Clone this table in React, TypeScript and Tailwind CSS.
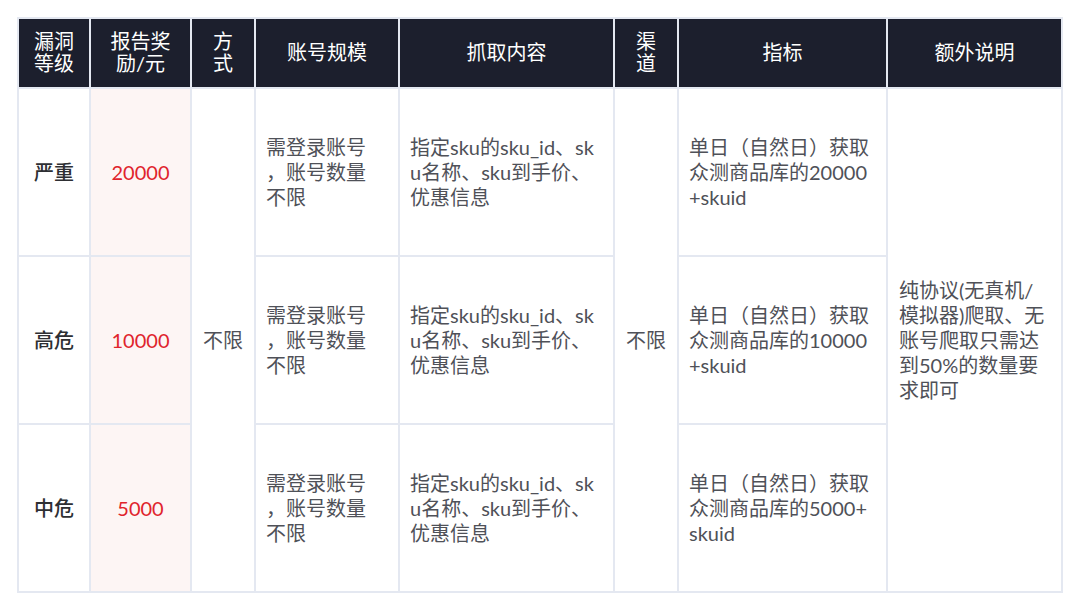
const FONT = '"Lato", "Noto Sans CJK SC", sans-serif';

const headers: { label: string[]; w: number }[] = [
  { label: ['漏洞', '等级'], w: 72 },
  { label: ['报告奖', '励/元'], w: 101 },
  { label: ['方', '式'], w: 64 },
  { label: ['账号规模'], w: 144 },
  { label: ['抓取内容'], w: 215 },
  { label: ['渠', '道'], w: 64 },
  { label: ['指标'], w: 209 },
  { label: ['额外说明'], w: 175 },
];

const rows = [
  { level: '严重', reward: '20000', metric: ['单日（自然日）获取', '众测商品库的20000', '+skuid'] },
  { level: '高危', reward: '10000', metric: ['单日（自然日）获取', '众测商品库的10000', '+skuid'] },
  { level: '中危', reward: '5000', metric: ['单日（自然日）获取', '众测商品库的5000+', 'skuid'] },
];

const account = ['需登录账号', '，账号数量', '不限'];
const content = ['指定sku的sku_id、sk', 'u名称、sku到手价、', '优惠信息'];
const extra = ['纯协议(无真机/', '模拟器)爬取、无', '账号爬取只需达', '到50%的数量要', '求即可'];

function Lines({ lines }: { lines: string[] }) {
  return (
    <>
      {lines.map((l, i) => (
        <div key={i} className="whitespace-nowrap">
          {l}
        </div>
      ))}
    </>
  );
}

const cell = 'border-2 border-[#e4e8f1] align-middle';

export default function App() {
  return (
    <div className="min-h-[609px] bg-white pl-[17px] pt-[17px]" style={{ fontFamily: FONT }}>
      <table className="table-fixed border-collapse text-[20px] leading-[25px] text-[#4f5158]" style={{ width: 1046 }}>
        <colgroup>
          {headers.map((h, i) => (
            <col key={i} style={{ width: h.w }} />
          ))}
        </colgroup>
        <thead>
          <tr className="h-[70px] bg-[#1c1f2d] text-white">
            {headers.map((h, i) => (
              <th key={i} className={`${cell} pb-[2px] text-center font-normal leading-[22px]`}>
                <Lines lines={h.label} />
              </th>
            ))}
          </tr>
        </thead>
        <tbody>
          {rows.map((r, i) => (
            <tr key={i} className="h-[168px]">
              <td className={`${cell} text-center font-medium text-[#2e2f33]`}>{r.level}</td>
              <td className={`${cell} bg-[#fdf5f4] text-center text-[#e0242c]`}>{r.reward}</td>
              {i === 0 && (
                <td rowSpan={3} className={`${cell} text-center`}>
                  不限
                </td>
              )}
              <td className={`${cell} pl-[10px]`}>
                <Lines lines={account} />
              </td>
              <td className={`${cell} pl-[10px]`}>
                <Lines lines={content} />
              </td>
              {i === 0 && (
                <td rowSpan={3} className={`${cell} text-center`}>
                  不限
                </td>
              )}
              <td className={`${cell} pl-[10px]`}>
                <Lines lines={r.metric} />
              </td>
              {i === 0 && (
                <td rowSpan={3} className={`${cell} pl-[11px]`}>
                  <Lines lines={extra} />
                </td>
              )}
            </tr>
          ))}
        </tbody>
      </table>
    </div>
  );
}
